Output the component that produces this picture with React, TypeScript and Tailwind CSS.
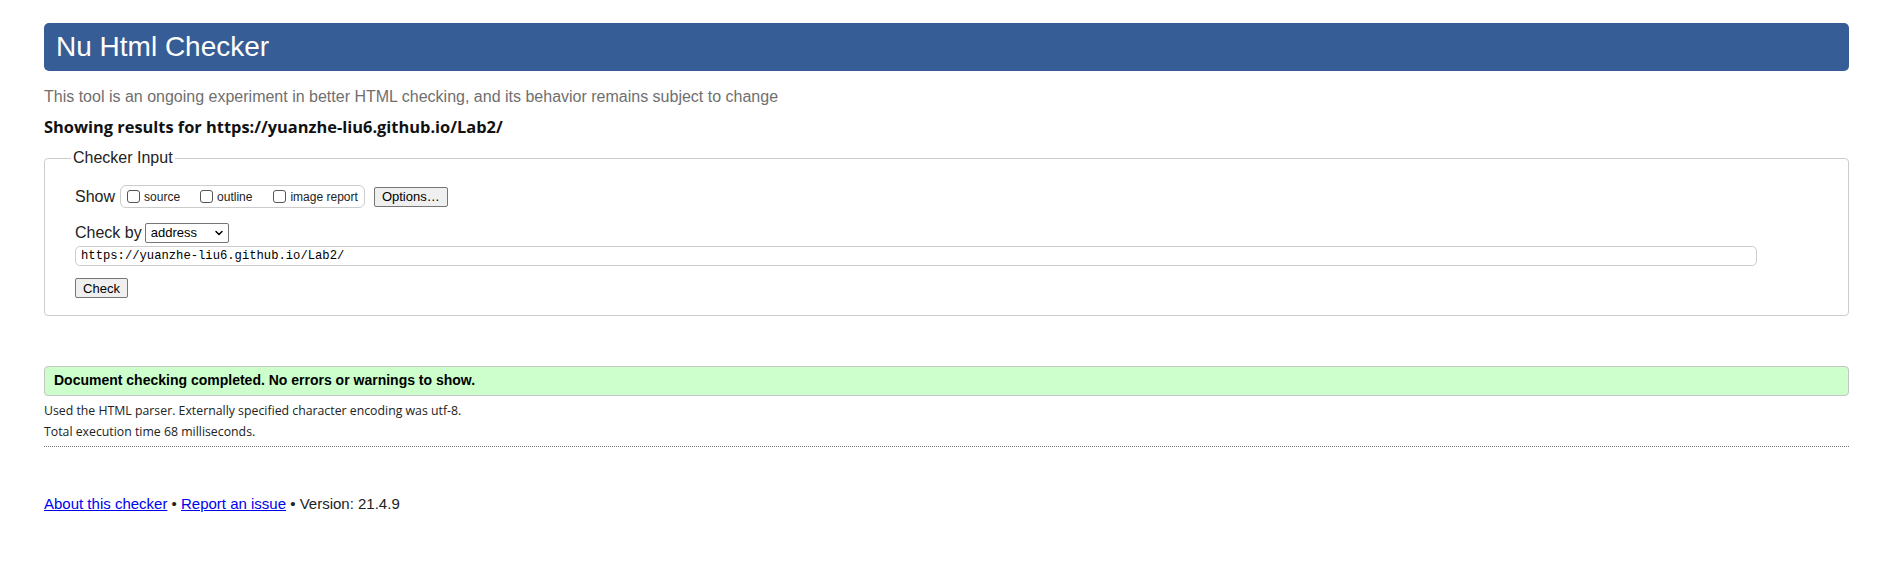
import { ChevronDown } from "lucide-react";

const Box: React.FC = () => (
    <span className="inline-block w-[13px] h-[13px] border border-[#555] rounded-[3px] bg-white shrink-0" />
);

const App: React.FC = () => {
    return (
        <div className="min-h-screen bg-white pl-[44px] pr-[32px] pt-[23px] font-['Liberation_Sans',Arial,sans-serif] text-[#111]">
            <h1 className="h-[48px] bg-[#365d95] rounded-[5px] text-white text-[28px] leading-[48px] pl-[12px]">
                Nu Html Checker
            </h1>
            <p className="mt-[16px] text-[16px] leading-[20px] text-[#6f6f6f]">
                This tool is an ongoing experiment in better HTML checking, and its behavior remains subject to change
            </p>
            <p className="mt-[10px] text-[16.4px] leading-[20px] font-bold font-['Open_Sans',sans-serif]">
                Showing results for https://yuanzhe-liu6.github.io/Lab2/
            </p>

            <fieldset className="mt-[12px] border border-[#ccc] rounded-[4px] pl-[30px] pr-[91px] pb-[15px]">
                <legend className="-ml-[4px] px-[2px] text-[16px] leading-[18px] text-[#222]">Checker Input</legend>

                <div className="flex items-center mt-[18px] h-[23px]">
                    <span className="text-[16px] text-[#222]">Show</span>
                    <div className="ml-[5px] h-[23px] flex items-center border border-[#ccc] rounded-[6px] pl-[6px] pr-[6px] text-[12px] text-[#222]">
                        <label className="flex items-center gap-[4px]"><Box />source</label>
                        <label className="flex items-center gap-[4px] ml-[20px]"><Box />outline</label>
                        <label className="flex items-center gap-[4px] ml-[21px]"><Box />image report</label>
                    </div>
                    <button className="ml-[9px] h-[20px] w-[74px] bg-[#efefef] border border-[#767676] rounded-[2px] text-[13px] text-black leading-none">
                        Options…
                    </button>
                </div>

                <div className="flex items-center mt-[15px] h-[20px]">
                    <span className="text-[16px] text-[#222]">Check by</span>
                    <div className="ml-[3px] h-[20px] w-[84px] flex items-center justify-between border border-[#767676] rounded-[2px] pl-[5px] pr-[3px] text-[13px] text-black">
                        <span>address</span>
                        <ChevronDown size={12} strokeWidth={3} />
                    </div>
                </div>

                <div className="mt-[3px] h-[20px] w-full flex items-center border border-[#ccc] rounded-[5px] pl-[5px] font-['Liberation_Mono',monospace] text-[12.2px] text-black">
                    https://yuanzhe-liu6.github.io/Lab2/
                </div>

                <button className="mt-[12px] h-[20px] w-[53px] bg-[#efefef] border border-[#767676] rounded-[2px] text-[13px] text-black leading-none">
                    Check
                </button>
            </fieldset>

            <div className="mt-[50px] h-[30px] flex items-center bg-[#ccffcc] border border-[#c4c4c4] rounded-[4px] pl-[9px] text-[14px] font-bold text-black">
                Document checking completed. No errors or warnings to show.
            </div>

            <div className="mt-[4px] pb-[4px] border-b border-dotted border-[#777] font-['Open_Sans',sans-serif] text-[12.3px] leading-[21px] text-[#222]">
                <p>Used the HTML parser. Externally specified character encoding was utf-8.</p>
                <p>Total execution time 68 milliseconds.</p>
            </div>

            <div className="mt-[47px] text-[15px] leading-[20px] text-[#222]">
                <a href="#" className="text-[#0000ee] underline">About this checker</a>
                {" • "}
                <a href="#" className="text-[#0000ee] underline">Report an issue</a>
                {" • Version: 21.4.9"}
            </div>
        </div>
    );
};

export default App;
